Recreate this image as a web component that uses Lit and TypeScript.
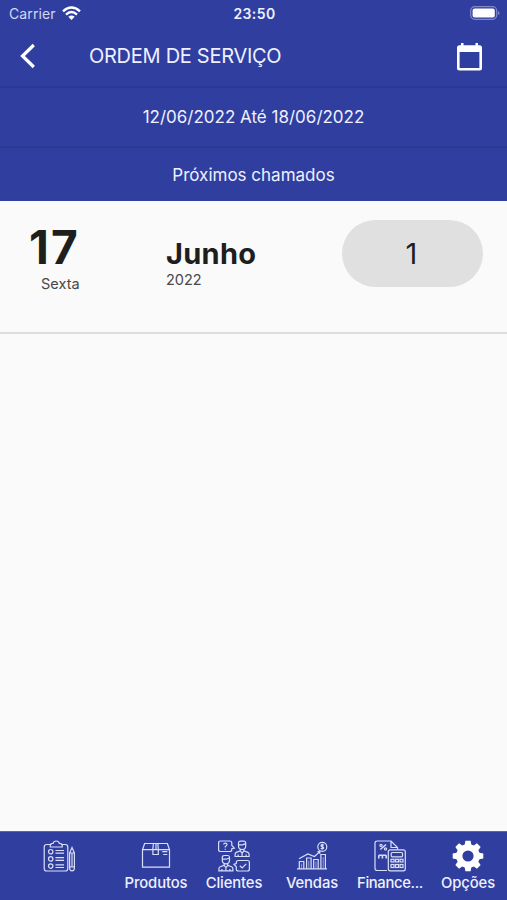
import { LitElement, html, css, svg } from "lit";
import { customElement } from "lit/decorators.js";

const gearPath = (() => {
  const pts: string[] = [];
  const teeth = 8;
  for (let i = 0; i < teeth; i++) {
    const mid = (i * 2 * Math.PI) / teeth - Math.PI / 2;
    const steps: [number, number][] = [[11.9, -0.28], [15.5, -0.17], [15.5, 0.17], [11.9, 0.28]];
    for (const [r, d] of steps) {
      pts.push(`${(16 + r * Math.cos(mid + d)).toFixed(2)} ${(16 + r * Math.sin(mid + d)).toFixed(2)}`);
    }
  }
  return `M${pts.join("L")}ZM16 10.4a5.600 5.600 0 1 0 0 11.200a5.600 5.600 0 1 0 0-11.200Z`;
})();

const person = svg`
  <path d="M4 5.2V2.6Q4 .6 6 .6h3.600Q11.200 .6 11.200 2.600V5.200Q11.200 9 7.600 9Q4 9 4 5.200Z M4 4.300h4l3.200-1.200 M5.800 8.700v1.700L1.900 11.900Q.6 12.500 .6 14V16H14.600V14Q14.600 12.500 13.300 11.900L9.400 10.400V8.700 M5.800 10.400l1.800 2.300l1.800-2.300 M7.600 12.700V16 M3.600 14v2 M11.600 14v2"/>`;

const icons = {
  orders: svg`
    <path d="M8.500 4.500H3.700Q1.200 4.500 1.200 7V28.500Q1.200 31 3.700 31H22.300Q24.800 31 24.800 28.500V7Q24.800 4.500 22.300 4.500H17.800"/>
    <path d="M7.300 7V5Q7.300 3.500 9 3.500H10Q10.600 1 13.200 1Q15.800 1 16.400 3.500H17.500Q19.200 3.500 19.200 5V7Z"/>
    <circle cx="7.700" cy="11.700" r="2.200"/><circle cx="7.700" cy="18.900" r="2.200"/><circle cx="7.700" cy="26.100" r="2.200"/>
    <path d="M12.500 10.500h8.500M12.500 13.200h8.500M12.500 17.600h8.500M12.500 20.300h8.500M12.500 24.800h8.500M12.500 27.500h8.500"/>
    <path d="M26.600 13L29 7.500L31.400 13V28Q31.400 30.800 29 30.800Q26.600 30.800 26.600 28ZM26.600 13h4.800M26.600 26.800h4.800M29 13V26"/>`,
  products: svg`
    <path d="M2.500 9.700L4.600 3.500H27.400L29.500 9.700V27.200H2.500ZM2.500 9.700H29.500M12.700 9.700L13.500 3.500M18.300 9.700L17.900 3.500M12.900 9.700V14.500H18.300V9.700M16 3.500V9.700M22.300 11.700h5M23.300 14.500h4"/>`,
  clients: svg`
    <g transform="translate(16.500 .5)">${person}</g>
    <g transform="translate(.3 14.900)">${person}</g>
    <path d="M2.500 1H11.800Q13.800 1 13.800 3V5.500L16.300 8.200L13.800 8.700V9.500Q13.800 11.500 11.800 11.500H2.500Q.6 11.500 .6 9.500V3Q.6 1 2.500 1Z"/>
    <path d="M5.600 4.500Q5.800 3.100 7.300 3.100Q9 3.100 9 4.500Q9 5.500 7.300 6.500V7.500M7.300 8.700v1"/>
    <path d="M20.300 20.500H29.500Q31.400 20.500 31.400 22.500V29Q31.400 31 29.500 31H20.300Q18.300 31 18.300 29V26.800L16 24.200L18.300 23.500V22.500Q18.300 20.500 20.300 20.500Z"/>
    <path d="M21.800 25.700l2.400 2.300l4-4.200"/>`,
  sales: svg`
    <path d="M1 28.800H31M3.300 28.500V21.500H7.800V28.500M10.600 28.500V18H15.100V28.500M17.700 28.500V19.500H22.200V28.500M24.900 28.500V14.500H29.400V28.500"/>
    <path d="M5.500 28.500V23.500M12.800 28.500V20.500M20 28.500V21.500M27.200 28.500V17" opacity=".5"/>
    <path d="M3 18.800L11.800 14L18.500 16.500L23.800 11.600M21.500 11.600H23.800V13.900"/>
    <circle cx="26.300" cy="6.800" r="4.500"/>
    <path d="M27.900 5.200Q26.300 4.200 25.100 5.300Q24.800 6.400 26.300 6.800Q28 7.300 27.500 8.300Q26.300 9.400 24.700 8.300M26.300 3.800V9.800"/>`,
  finance: svg`
    <path d="M13 30.500H3.300Q1 30.500 1 28.300V3.200Q1 1 3.300 1H17L23.500 7.500V9.500M17 1V7.500H23.500"/>
    <path d="M6.300 9.500L12 4.500M4.800 15.200h7.400M4.800 18.500V15.200M8.400 18.500V15.200M12.200 18.500V15.200" stroke-width="1.600"/>
    <circle cx="7" cy="5.400" r="1.100"/><circle cx="11.500" cy="8.900" r="1.100"/>
    <rect x="14.300" y="9.800" width="17" height="21" rx="2"/><rect x="17.200" y="12.500" width="11.300" height="4.300" rx="1"/>
    <rect x="17" y="19.300" width="3" height="2.600"/><rect x="21.500" y="19.300" width="3" height="2.600"/><rect x="26" y="19.300" width="3" height="2.600"/><rect x="17" y="24.500" width="3" height="3"/><rect x="21.500" y="24.500" width="3" height="3"/><rect x="26" y="24.500" width="3" height="3"/>`,
  options: svg`<path class="solid" fill-rule="evenodd" d=${gearPath} />`,
};

const tabs = [
  { icon: icons.orders, label: "", cls: "t0" },
  { icon: icons.products, label: "Produtos", cls: "" },
  { icon: icons.clients, label: "Clientes", cls: "" },
  { icon: icons.sales, label: "Vendas", cls: "" },
  { icon: icons.finance, label: "Finance...", cls: "wide" },
  { icon: icons.options, label: "Opções", cls: "" },
];

@customElement("app-root")
export class AppRoot extends LitElement {
  static styles = css`
    :host {
      display: flex;
      flex-direction: column;
      height: 900px;
      background: #fafafa;
      color: #1e1e1e;
      font-family: Inter, "Liberation Sans", sans-serif;
      overflow: hidden;
    }
    * { box-sizing: border-box; }
    span { white-space: nowrap; }
    svg { display: block; }
    .status, .bar, .band, .nav { background: #303f9f; color: #eef0ff; }
    .status {
      height: 28px;
      display: grid;
      grid-template-columns: 1fr auto 1fr;
      align-items: center;
      padding: 0 7px 0 9px;
      font-size: 14px;
      line-height: 28px;
    }
    .carrier { display: flex; align-items: center; gap: 6px; color: #d3d8f2; letter-spacing: 0.1px; }
    .carrier svg { margin-bottom: 2px; }
    .clock { font-weight: 600; letter-spacing: 0.4px; }
    .battery { justify-self: end; margin-bottom: 2px; }
    .bar {
      height: 60px;
      display: flex;
      align-items: center;
      padding: 0 24px 2px 18px;
      border-bottom: 2px solid #2c3994;
    }
    .title { flex: 1; margin-left: 51px; font-size: 20px; letter-spacing: -0.28px; }
    .band {
      display: flex;
      align-items: center;
      justify-content: center;
      font-size: 17px;
    }
    .range { height: 60px; border-bottom: 2px solid #2c3994; }
    .next { height: 53px; }
    .row {
      height: 133px;
      display: flex;
      align-items: flex-start;
      padding: 19px 24px 0 29px;
      border-bottom: 2px solid #dedede;
    }
    .day { width: 137px; display: flex; flex-direction: column; }
    .num { font-size: 46px; line-height: 54px; font-weight: 700; letter-spacing: 2.200px; }
    .week { font-size: 14.500px; line-height: 19px; padding-left: 12px; color: #484848; }
    .month { flex: 1; display: flex; flex-direction: column; padding-top: 15px; }
    .name { font-size: 29px; line-height: 38px; font-weight: 700; letter-spacing: 0.3px; }
    .year { font-size: 14.500px; line-height: 14px; color: #484848; }
    .pill {
      width: 141px;
      height: 67px;
      border-radius: 34px;
      background: #e0e0e0;
      display: flex;
      align-items: center;
      justify-content: center;
      font-size: 29px;
      padding-right: 2px;
    }
    .body { flex: 1; }
    .nav { height: 69px; display: flex; border-top: 1px solid #5964b0; }
    .tab {
      flex: 1 1 0;
      display: flex;
      flex-direction: column;
      align-items: center;
      padding-top: 8px;
      font-size: 14.800px;
      font-weight: 500;
      letter-spacing: -0.1px;
      line-height: 20px;
    }
    .wide { letter-spacing: -0.35px; }
    .tab.t0 { flex-grow: 1.5; }
    .glyph { fill: none; stroke: #d9def8; stroke-width: 1.200; margin-bottom: 1px; }
    .solid { fill: #fff; stroke: none; }
  `;

  render() {
    return html`
      <header class="status">
        <div class="carrier">
          <span>Carrier</span>
          <svg width="19" height="15" viewBox="0 0 19 15" fill="none" stroke="#fff" stroke-width="2.400">
            <path d="M1 5.300Q9.500-2.300 18 5.300M4 8.600Q9.500 3.600 15 8.600" />
            <path d="M9.500 14L6.300 10.800Q9.500 8 12.700 10.800Z" fill="#fff" stroke="none" />
          </svg>
        </div>
        <span class="clock">23:50</span>
        <svg class="battery" width="30" height="14" viewBox="0 0 30 14">
          <rect x=".7" y=".7" width="26" height="12.600" rx="4" fill="none" stroke="#7f89c7" stroke-width="1.200" />
          <rect x="2.600" y="2.600" width="22.200" height="8.800" rx="2" fill="#fff" />
          <path d="M28 5Q29.500 5.500 29.500 7T28 9Z" fill="#7f89c7" />
        </svg>
      </header>
      <div class="bar">
        <svg width="20" height="26" viewBox="0 0 20 26" fill="none" stroke="#fff" stroke-width="3.200">
          <path d="M15.800 2L4.500 13L15.800 24" />
        </svg>
        <span class="title">ORDEM DE SERVIÇO</span>
        <svg width="27" height="29" viewBox="0 0 27 29">
          <path fill="#fff" fill-rule="evenodd" d="M5 1h2.500v2.300h12V1H22v2.300h1.500Q26 3.300 26 5.800V26Q26 28.500 23.500 28.500H3.500Q1 28.500 1 26V5.800Q1 3.300 3.500 3.300H5ZM3.600 10V26H23.400V10Z" />
        </svg>
      </div>
      <div class="band range"><span>12/06/2022 Até 18/06/2022</span></div>
      <div class="band next"><span>Próximos chamados</span></div>
      <section class="row">
        <div class="day"><span class="num">17</span><span class="week">Sexta</span></div>
        <div class="month"><span class="name">Junho</span><span class="year">2022</span></div>
        <div class="pill"><span>1</span></div>
      </section>
      <main class="body"></main>
      <nav class="nav">
        ${tabs.map(
          (t) => html`<div class="tab ${t.cls}">
            <svg class="glyph" width="32" height="32" viewBox="0 0 32 32">${t.icon}</svg>
            <span>${t.label}</span>
          </div>`
        )}
      </nav>
    `;
  }
}
